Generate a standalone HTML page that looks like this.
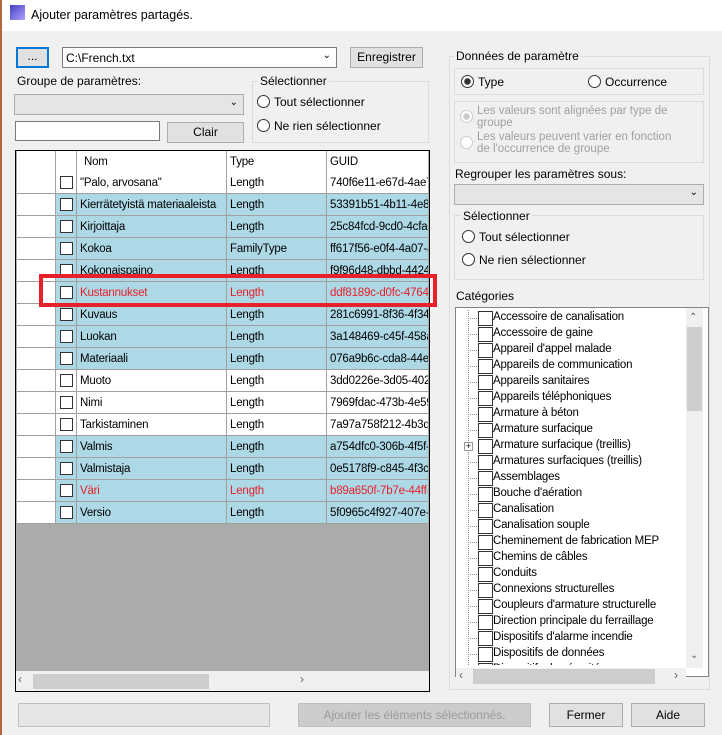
<!DOCTYPE html>
<html><head><meta charset="utf-8"><style>
*{box-sizing:border-box;margin:0;padding:0}
body{width:722px;height:735px;background:#f0f0f0;font-family:"Liberation Sans",sans-serif;font-size:12px;color:#000;position:relative;overflow:hidden}
.a{position:absolute}
.btn{position:absolute;background:#e1e1e1;border:1px solid #adadad;text-align:center}
.grp{position:absolute;border:1px solid #dcdcdc}
.lbl{position:absolute;background:#f0f0f0;padding:0 2px}
.rad{position:absolute;width:13px;height:13px;border:1px solid #333;border-radius:50%;background:#fff}
.row{position:absolute;left:17px;width:411px;height:22px;border-bottom:1px solid #a0a0a0}
.row div{position:absolute;top:0;height:21px;line-height:22px;border-right:1px solid #a0a0a0;white-space:nowrap;overflow:hidden;font-size:11.5px;letter-spacing:-0.2px}
.rh{left:0;width:39px;background:#fff}
.ck{left:39px;width:21px}
.ck::after{content:"";position:absolute;left:4px;top:4px;width:13px;height:13px;border:1px solid #333;background:#fff;box-sizing:border-box}
.hd .ck::after{display:none}
.n{left:60px;width:150px;padding-left:3px}
.t{left:210px;width:100px;padding-left:3px}
.g{left:310px;width:101px;padding-left:3px;border-right:none!important}
.b{background:#add8e6}.w{background:#fff}
.red div{color:#e8202a}
.ti{position:absolute;left:478px;height:16px;line-height:17px;white-space:nowrap;font-size:11.5px;letter-spacing:-0.2px}
.ti::before{content:"";position:absolute;left:0;top:2px;width:13px;height:13px;border:1px solid #333;background:#fff}
.ti span{padding-left:15px}
.dot{position:absolute;left:468px;width:9px;border-top:1px dotted #888}
</style></head><body>
<div class="a" style="left:0;top:0;width:722px;height:31px;background:#fff"></div>
<div class="a" style="left:0;top:0;width:2px;height:735px;background:#b8643c"></div>
<div class="a" style="left:10px;top:5px;width:15px;height:15px;background:linear-gradient(135deg,#4040c0,#b0a0ff)"></div>
<div class="a" style="left:31px;top:8px;font-size:12.5px">Ajouter paramètres partagés.</div>

<div class="btn" style="left:16px;top:47px;width:33px;height:21px;border:2px solid #0078d7;line-height:15px">...</div>
<div class="a" style="left:62px;top:47px;width:275px;height:21px;background:#fff;border:1px solid #7a7a7a;padding:3px 3px">C:\French.txt<span style="position:absolute;right:5px;top:2px;font-size:10px">&#8964;</span></div>
<div class="btn" style="left:350px;top:47px;width:73px;height:21px;line-height:19px">Enregistrer</div>
<div class="a" style="left:17px;top:74px">Groupe de paramètres:</div>
<div class="a" style="left:14px;top:94px;width:230px;height:21px;background:#e5e5e5;border:1px solid #adadad"><span style="position:absolute;right:5px;top:2px;font-size:10px">&#8964;</span></div>
<div class="a" style="left:15px;top:121px;width:145px;height:20px;background:#fff;border:1px solid #7a7a7a"></div>
<div class="btn" style="left:167px;top:122px;width:77px;height:21px;line-height:19px">Clair</div>
<div class="grp" style="left:252px;top:81px;width:177px;height:62px"></div>
<div class="lbl" style="left:258px;top:74px">Sélectionner</div>
<div class="rad" style="left:257px;top:95px"></div><div class="a" style="left:274px;top:95px">Tout sélectionner</div>
<div class="rad" style="left:257px;top:119px"></div><div class="a" style="left:274px;top:119px">Ne rien sélectionner</div>

<div class="a" style="left:15px;top:150px;width:415px;height:542px;border:1px solid #000;background:#ababab"></div>
<div class="row w hd" style="top:151px"><div class="rh"></div><div class="ck" style="background:#fff"></div><div class="n" style="padding-left:7px">Nom</div><div class="t">Type</div><div class="g">GUID</div></div>
<div class="row w" style="top:172px"><div class="rh"></div><div class="ck"></div><div class="n">"Palo, arvosana"</div><div class="t">Length</div><div class="g">740f6e11-e67d-4ae7</div></div>
<div class="row b" style="top:194px"><div class="rh"></div><div class="ck"></div><div class="n">Kierrätetyistä materiaaleista</div><div class="t">Length</div><div class="g">53391b51-4b11-4e8a</div></div>
<div class="row b" style="top:216px"><div class="rh"></div><div class="ck"></div><div class="n">Kirjoittaja</div><div class="t">Length</div><div class="g">25c84fcd-9cd0-4cfa-</div></div>
<div class="row b" style="top:238px"><div class="rh"></div><div class="ck"></div><div class="n">Kokoa</div><div class="t">FamilyType</div><div class="g">ff617f56-e0f4-4a07-a</div></div>
<div class="row b" style="top:260px"><div class="rh"></div><div class="ck"></div><div class="n">Kokonaispaino</div><div class="t">Length</div><div class="g">f9f96d48-dbbd-4424-</div></div>
<div class="row b red" style="top:282px"><div class="rh"></div><div class="ck"></div><div class="n">Kustannukset</div><div class="t">Length</div><div class="g">ddf8189c-d0fc-4764-</div></div>
<div class="row b" style="top:304px"><div class="rh"></div><div class="ck"></div><div class="n">Kuvaus</div><div class="t">Length</div><div class="g">281c6991-8f36-4f34-</div></div>
<div class="row b" style="top:326px"><div class="rh"></div><div class="ck"></div><div class="n">Luokan</div><div class="t">Length</div><div class="g">3a148469-c45f-458a</div></div>
<div class="row b" style="top:348px"><div class="rh"></div><div class="ck"></div><div class="n">Materiaali</div><div class="t">Length</div><div class="g">076a9b6c-cda8-44ea</div></div>
<div class="row w" style="top:370px"><div class="rh"></div><div class="ck"></div><div class="n">Muoto</div><div class="t">Length</div><div class="g">3dd0226e-3d05-402a</div></div>
<div class="row w" style="top:392px"><div class="rh"></div><div class="ck"></div><div class="n">Nimi</div><div class="t">Length</div><div class="g">7969fdac-473b-4e59</div></div>
<div class="row w" style="top:414px"><div class="rh"></div><div class="ck"></div><div class="n">Tarkistaminen</div><div class="t">Length</div><div class="g">7a97a758f212-4b3d</div></div>
<div class="row b" style="top:436px"><div class="rh"></div><div class="ck"></div><div class="n">Valmis</div><div class="t">Length</div><div class="g">a754dfc0-306b-4f5f-8</div></div>
<div class="row b" style="top:458px"><div class="rh"></div><div class="ck"></div><div class="n">Valmistaja</div><div class="t">Length</div><div class="g">0e5178f9-c845-4f3c-</div></div>
<div class="row b red" style="top:480px"><div class="rh"></div><div class="ck"></div><div class="n">Väri</div><div class="t">Length</div><div class="g">b89a650f-7b7e-44ff-8</div></div>
<div class="row b" style="top:502px"><div class="rh"></div><div class="ck"></div><div class="n">Versio</div><div class="t">Length</div><div class="g">5f0965c4f927-407e-</div></div>
<div class="a" style="left:16px;top:671px;width:413px;height:20px;background:#f0f0f0"></div>
<div class="a" style="left:33px;top:674px;width:176px;height:15px;background:#cdcdcd"></div>
<div class="a" style="left:18px;top:672px;color:#606060">&#8249;</div><div class="a" style="left:300px;top:672px;color:#606060">&#8250;</div>
<div class="a" style="left:39px;top:274px;width:398px;height:33px;border:4px solid #e8202a"></div>

<div class="grp" style="left:449px;top:56px;width:261px;height:634px"></div>
<div class="lbl" style="left:454px;top:49px">Données de paramètre</div>
<div class="grp" style="left:454px;top:68px;width:250px;height:27px"></div>
<div class="rad" style="left:461px;top:75px;background:radial-gradient(circle,#333 3px,#fff 3.5px)"></div><div class="a" style="left:478px;top:75px">Type</div>
<div class="rad" style="left:588px;top:75px"></div><div class="a" style="left:605px;top:75px">Occurrence</div>
<div class="grp" style="left:454px;top:101px;width:250px;height:62px"></div>
<div class="rad" style="left:460px;top:110px;border-color:#ccc;background:radial-gradient(circle,#ccc 3px,#fff 3.5px)"></div>
<div class="a" style="left:477px;top:105px;color:#a0a0a0;line-height:12px;font-size:11.5px">Les valeurs sont alignées par type de<br>groupe</div>
<div class="rad" style="left:460px;top:136px;border-color:#ccc"></div>
<div class="a" style="left:477px;top:131px;color:#a0a0a0;line-height:12px;font-size:11.5px">Les valeurs peuvent varier en fonction<br>de l'occurrence de groupe</div>
<div class="a" style="left:455px;top:167px">Regrouper les paramètres sous:</div>
<div class="a" style="left:454px;top:184px;width:250px;height:21px;background:#e5e5e5;border:1px solid #adadad"><span style="position:absolute;right:5px;top:2px;font-size:10px">&#8964;</span></div>
<div class="grp" style="left:454px;top:215px;width:250px;height:65px"></div>
<div class="lbl" style="left:461px;top:209px">Sélectionner</div>
<div class="rad" style="left:462px;top:230px"></div><div class="a" style="left:479px;top:230px">Tout sélectionner</div>
<div class="rad" style="left:462px;top:253px"></div><div class="a" style="left:479px;top:253px">Ne rien sélectionner</div>
<div class="lbl" style="left:454px;top:289px">Catégories</div>
<div class="a" style="left:455px;top:307px;width:254px;height:370px;background:#fff;border:1px solid #828282"></div>
<div class="a" style="left:468px;top:310px;height:355px;border-left:1px dotted #888"></div>
<div style="position:absolute;left:0;top:0;width:722px;height:735px;clip-path:inset(308px 35px 70px 456px)">
<div class="dot" style="top:318px"></div><div class="ti" style="top:309px"><span>Accessoire de canalisation</span></div>
<div class="dot" style="top:334px"></div><div class="ti" style="top:325px"><span>Accessoire de gaine</span></div>
<div class="dot" style="top:350px"></div><div class="ti" style="top:341px"><span>Appareil d'appel malade</span></div>
<div class="dot" style="top:366px"></div><div class="ti" style="top:357px"><span>Appareils de communication</span></div>
<div class="dot" style="top:382px"></div><div class="ti" style="top:373px"><span>Appareils sanitaires</span></div>
<div class="dot" style="top:398px"></div><div class="ti" style="top:389px"><span>Appareils téléphoniques</span></div>
<div class="dot" style="top:414px"></div><div class="ti" style="top:405px"><span>Armature à béton</span></div>
<div class="dot" style="top:430px"></div><div class="ti" style="top:421px"><span>Armature surfacique</span></div>
<div class="a" style="left:464px;top:442px;width:9px;height:9px;border:1px solid #999;background:#fff;font-size:9px;line-height:7px;text-align:center">+</div><div class="ti" style="top:437px"><span>Armature surfacique (treillis)</span></div>
<div class="dot" style="top:462px"></div><div class="ti" style="top:453px"><span>Armatures surfaciques (treillis)</span></div>
<div class="dot" style="top:478px"></div><div class="ti" style="top:469px"><span>Assemblages</span></div>
<div class="dot" style="top:494px"></div><div class="ti" style="top:485px"><span>Bouche d'aération</span></div>
<div class="dot" style="top:510px"></div><div class="ti" style="top:501px"><span>Canalisation</span></div>
<div class="dot" style="top:526px"></div><div class="ti" style="top:517px"><span>Canalisation souple</span></div>
<div class="dot" style="top:542px"></div><div class="ti" style="top:533px"><span>Cheminement de fabrication MEP</span></div>
<div class="dot" style="top:558px"></div><div class="ti" style="top:549px"><span>Chemins de câbles</span></div>
<div class="dot" style="top:574px"></div><div class="ti" style="top:565px"><span>Conduits</span></div>
<div class="dot" style="top:590px"></div><div class="ti" style="top:581px"><span>Connexions structurelles</span></div>
<div class="dot" style="top:606px"></div><div class="ti" style="top:597px"><span>Coupleurs d'armature structurelle</span></div>
<div class="dot" style="top:622px"></div><div class="ti" style="top:613px"><span>Direction principale du ferraillage</span></div>
<div class="dot" style="top:638px"></div><div class="ti" style="top:629px"><span>Dispositifs d'alarme incendie</span></div>
<div class="dot" style="top:654px"></div><div class="ti" style="top:645px"><span>Dispositifs de données</span></div>
<div class="dot" style="top:670px"></div><div class="ti" style="top:661px"><span>Dispositifs de sécurité</span></div>
</div>
<div class="a" style="left:686px;top:308px;width:17px;height:360px;background:#f0f0f0"></div>
<div class="a" style="left:687px;top:327px;width:15px;height:84px;background:#cdcdcd"></div>
<div class="a" style="left:689px;top:312px;font-size:10px;color:#606060">&#8963;</div>
<div class="a" style="left:690px;top:650px;font-size:10px;color:#606060">&#8964;</div>
<div class="a" style="left:456px;top:668px;width:230px;height:18px;background:#f0f0f0"></div>
<div class="a" style="left:473px;top:669px;width:182px;height:15px;background:#cdcdcd"></div>
<div class="a" style="left:459px;top:668px;color:#606060">&#8249;</div><div class="a" style="left:674px;top:668px;color:#606060">&#8250;</div>

<div class="a" style="left:18px;top:703px;width:252px;height:24px;background:#e5e5e5;border:1px solid #bfbfbf"></div>
<div class="btn" style="left:298px;top:703px;width:233px;height:24px;line-height:22px;background:#cccccc;border-color:#bfbfbf;color:#9a9a9a">Ajouter les éléments sélectionnés.</div>
<div class="btn" style="left:549px;top:703px;width:74px;height:24px;line-height:22px">Fermer</div>
<div class="btn" style="left:631px;top:703px;width:74px;height:24px;line-height:22px">Aide</div>
</body></html>
